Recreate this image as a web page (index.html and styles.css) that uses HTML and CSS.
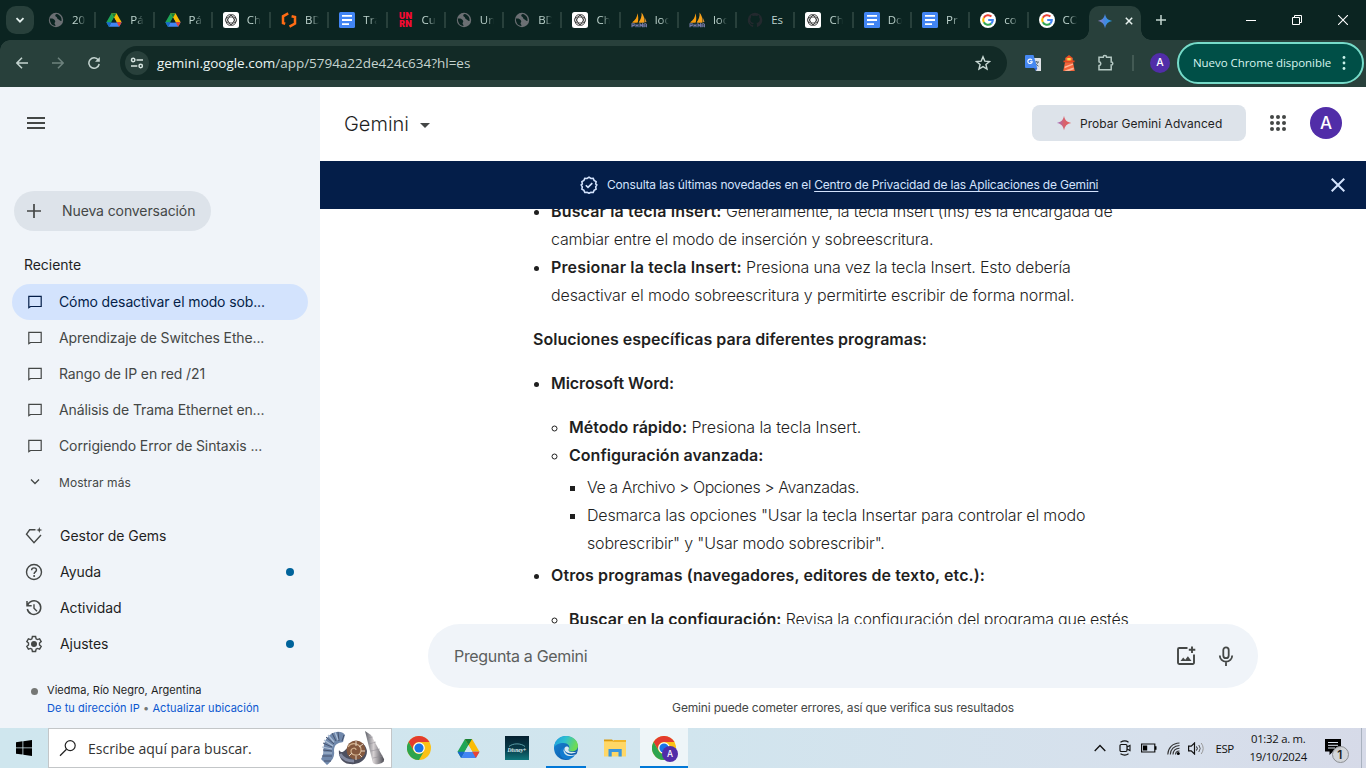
FILE: index.html
```html
<!DOCTYPE html>
<html lang="es">
<head>
<meta charset="utf-8">
<title>Gemini</title>
<link rel="stylesheet" href="styles.css">
</head>
<body>
<svg class="defs" width="0" height="0" aria-hidden="true">
  <defs>
    <linearGradient id="gblue" x1="0" y1="0" x2="1" y2="0"><stop offset="0" stop-color="#9c7fc9"/><stop offset=".45" stop-color="#4a86e0"/><stop offset="1" stop-color="#1fa0e8"/></linearGradient>
    <linearGradient id="gred" x1="0" y1="0" x2="1" y2="0"><stop offset="0" stop-color="#9b6fc4"/><stop offset=".5" stop-color="#d9626c"/><stop offset="1" stop-color="#e0605c"/></linearGradient>
    <linearGradient id="edgeA" x1="0" y1="0" x2="1" y2=".3"><stop offset="0" stop-color="#1b9de2"/><stop offset=".5" stop-color="#2fc0cf"/><stop offset="1" stop-color="#6edb55"/></linearGradient>
    <linearGradient id="edgeB" x1="0" y1="0" x2="1" y2="1"><stop offset="0" stop-color="#1689d8"/><stop offset="1" stop-color="#0c4f9e"/></linearGradient>
    <linearGradient id="dis" x1="0" y1="0" x2="0" y2="1"><stop offset="0" stop-color="#04202f"/><stop offset=".55" stop-color="#083c4a"/><stop offset="1" stop-color="#10777c"/></linearGradient>
    <linearGradient id="shell" x1="0" y1="0" x2="1" y2="0"><stop offset="0" stop-color="#5d6068"/><stop offset=".45" stop-color="#d5d0d2"/><stop offset="1" stop-color="#4c4c54"/></linearGradient>
    <symbol id="globe" viewBox="0 0 16 16"><circle cx="8" cy="8" r="7.2" fill="#6b6f73"/><path d="M1.800 6.600c2.400-.5 4 .2 5 1.600 1 1.300.2 2-.3 3 .3 1 1 1.500 1 2.800-3.500-.2-5.600-2.700-5.700-7.400zM8.600 1.900C6.800 2.400 6.900 4 8.200 4.700c1.600.8.4 2 2 2.500 1.400.4 1.400 1.800 3.300 1.700.5-3.400-1.300-6.300-4.900-7z" fill="#0b2421"/></symbol>
    <symbol id="drive" viewBox="0 0 24 22"><path d="M8.300 1h7.400L8 14.300 4.300 21 .5 14.500z" fill="#1ea556"/><path d="M8.300 1h7.400l7.800 13.500h-7.500z" fill="#fbbc04"/><path d="M4.300 21l3.800-6.500h15.400L19.700 21z" fill="#4285f4"/><path d="M.5 14.500h7.600L4.300 21z" fill="#1967d2"/><path d="M16 14.500h7.500L19.700 21z" fill="#ea4335"/><path d="M8.300 1h7.400L12 7.500z" fill="#188038"/><path d="M12 7.700l4 6.900H8z" fill="var(--hole,#0b2421)"/></symbol>
    <symbol id="gpt" viewBox="0 0 16 16"><rect width="16" height="16" rx="2.500" fill="#fff"/><g fill="none" stroke="#222" stroke-width=".75"><rect x="2.300" y="5" width="11.400" height="6" rx="3"/><rect x="2.300" y="5" width="11.400" height="6" rx="3" transform="rotate(60 8 8)"/><rect x="2.300" y="5" width="11.400" height="6" rx="3" transform="rotate(120 8 8)"/></g></symbol>
    <symbol id="doc" viewBox="0 0 16 16"><rect width="16" height="16" rx="1.500" fill="#4285f4"/><path d="M3 3.900h10M3 8h10M3 12.100h7" stroke="#fff" stroke-width="1.900"/></symbol>
    <symbol id="pma" viewBox="0 0 16 16"><path d="M6.300 1.300C6.300 5 4.500 8.300 1 10.500c2 .4 3.800.5 5.800 0C7.600 7 7.300 4 6.300 1.300z" fill="#f89c0e"/><path d="M10.600.6c.3 4-1 7.500-3 9.800 2 .5 4 .5 6 0C13.700 6 12.500 3 10.600.6z" fill="#f6a11b"/><path d="M13.500 5c1 2 1.500 3.500 2 5l-1.500.3z" fill="#c98b3d"/><path d="M1 15.300v-3.500h2.200v1.800H1.500M5 15.300v-3.500M5 13.500h2M7 15.300v-3.500M9 15.300v-3.500l1.300 2 1.300-2v3.500M13 15.300v-3l1.200-.7 1.200.7v3M13 14h2.400" fill="none" stroke="#777aa8" stroke-width="1.100"/></symbol>
    <symbol id="goog" viewBox="0 0 16 16"><circle cx="8" cy="8" r="8" fill="#fff"/><g fill="none" stroke-width="2.100"><path d="M11.400 4.600A4.800 4.800 0 0 0 3.800 5.700" stroke="#ea4335"/><path d="M3.800 5.700a4.800 4.800 0 0 0 0 4.600" stroke="#fbbc04"/><path d="M3.800 10.300a4.800 4.800 0 0 0 7.400 1.300" stroke="#34a853"/><path d="M11.200 11.600A4.700 4.700 0 0 0 12.800 8H8.200" stroke="#4285f4"/></g></symbol>
    <symbol id="spark" viewBox="0 0 16 16"><path d="M8 .8C8.700 5 11 7.300 15.200 8 11 8.700 8.700 11 8 15.200 7.300 11 5 8.700.8 8 5 7.300 7.300 5 8 .8z"/></symbol>
    <symbol id="chrome" viewBox="0 0 24 24"><circle cx="12" cy="12" r="12" fill="#fbc116"/><path d="M1.600 6A12 12 0 0 1 22.400 6H12a6 6 0 0 0-5.200 9z" fill="#e33b2e"/><path d="M1.600 6l5.200 9A6 6 0 0 0 17 15.200L12 24A12 12 0 0 1 1.600 6z" fill="#2da44e"/><circle cx="12" cy="12" r="5.800" fill="#fff"/><circle cx="12" cy="12" r="4.600" fill="#1a73e8"/></symbol>
    <symbol id="chat" viewBox="0 0 14 14"><path d="M.8 12.600V1.400h12.400v10.100H2.600z" fill="none" stroke="currentColor" stroke-width="1.200"/></symbol>
  </defs>
</svg>

<div class="screen">
  <div class="tabstrip">
    <div class="tabsearch"><svg width="10" height="10" viewBox="0 0 10 10"><path d="M1.500 3.200L5 6.700l3.500-3.500" fill="none" stroke="#e3f0ed" stroke-width="1.800"/></svg></div>
    <div class="tab"><svg><use href="#globe"/></svg><span>20</span></div>
    <div class="tab"><svg><use href="#drive"/></svg><span>Pá</span></div>
    <div class="tab"><svg><use href="#drive"/></svg><span>Pá</span></div>
    <div class="tab"><svg><use href="#gpt"/></svg><span>Ch</span></div>
    <div class="tab"><svg viewBox="0 0 16 16"><path d="M7.200 1.400L2 4.300v6.800l2.200.7M10.600 4.200L14 5v6.500L8.500 14.600" fill="none" stroke="#ff6c14" stroke-width="2.500"/></svg><span>BD</span></div>
    <div class="tab"><svg><use href="#doc"/></svg><span>Tra</span></div>
    <div class="tab"><div class="unrn">UN<br>RN</div><span>Cu</span></div>
    <div class="tab"><svg><use href="#globe"/></svg><span>Un</span></div>
    <div class="tab"><svg><use href="#globe"/></svg><span>BD</span></div>
    <div class="tab"><svg><use href="#gpt"/></svg><span>Ch</span></div>
    <div class="tab"><svg><use href="#pma"/></svg><span>loc</span></div>
    <div class="tab"><svg><use href="#pma"/></svg><span>loc</span></div>
    <div class="tab"><svg viewBox="0 0 16 16"><path d="M8 .8a7.300 7.300 0 0 0-2.300 14.200c.4 0 .5-.2.500-.4v-1.500c-2 .4-2.500-.9-2.500-.9-.4-.9-.9-1.200-.9-1.200-.6-.5.1-.4.100-.4.800 0 1.200.8 1.200.8.700 1.200 1.800.8 2.200.6.100-.5.300-.8.500-1-1.700-.2-3.400-.8-3.400-3.700 0-.8.300-1.500.8-2-.1-.200-.3-1 .1-2 0 0 .6-.2 2 .8a7 7 0 0 1 3.600 0c1.400-1 2-.8 2-.8.4 1 .2 1.800.1 2 .5.500.8 1.200.8 2 0 2.900-1.800 3.500-3.400 3.700.3.200.5.700.5 1.400v2.200c0 .2.100.5.500.4A7.300 7.300 0 0 0 8 .8z" fill="#23292e"/></svg><span class="wide">Es</span></div>
    <div class="tab"><svg><use href="#gpt"/></svg><span>Ch</span></div>
    <div class="tab"><svg><use href="#doc"/></svg><span>Do</span></div>
    <div class="tab"><svg><use href="#doc"/></svg><span>Pr</span></div>
    <div class="tab"><svg><use href="#goog"/></svg><span>co</span></div>
    <div class="tab nosep"><svg><use href="#goog"/></svg><span>CO</span></div>
    <div class="tab active"><svg fill="url(#gblue)"><use href="#spark"/></svg><svg class="x" viewBox="0 0 8 8"><path d="M.8.8l6.400 6.400M7.200.8L.8 7.200" stroke="#e8f2ef" stroke-width="1.500"/></svg></div>
    <svg class="plus" viewBox="0 0 10 10"><path d="M5 0v10M0 5h10" stroke="#c3d5d0" stroke-width="1.500"/></svg>
    <div class="winctl">
      <svg width="10" height="10" viewBox="0 0 10 10"><path d="M0 5.500h10" stroke="#fff"/></svg>
      <svg width="10" height="10" viewBox="0 0 10 10"><path d="M.5 2.500h7v7h-7zM2.500 2.500v-2h7v7h-2" fill="none" stroke="#fff"/></svg>
      <svg width="10" height="10" viewBox="0 0 10 10"><path d="M0 0l10 10M10 0L0 10" stroke="#fff" stroke-width="1.100"/></svg>
    </div>
  </div>

  <div class="toolbar">
    <div class="nav">
      <svg width="12" height="12" viewBox="0 0 12 12"><path d="M12 6H1.200M6 .8L.9 6 6 11.200" fill="none" stroke="#c3d3cf" stroke-width="1.500"/></svg>
      <svg width="12" height="12" viewBox="0 0 12 12"><path d="M0 6h10.800M6 .8L11.100 6 6 11.200" fill="none" stroke="#6d827d" stroke-width="1.500"/></svg>
      <svg width="12" height="12" viewBox="0 0 12 12"><path d="M10.300 3A5.200 5.200 0 1 0 11.200 7" fill="none" stroke="#c3d3cf" stroke-width="1.500"/><path d="M11.800 0v4.800H7z" fill="#c3d3cf"/></svg>
    </div>
    <div class="omni">
      <div class="site"><svg width="14" height="14" viewBox="0 0 14 14"><g fill="none" stroke="#d7e5e1" stroke-width="1.500"><circle cx="3.200" cy="4" r="1.700"/><path d="M6.500 4H13M1 10h6.300"/><circle cx="10.700" cy="10" r="1.700"/></g></svg></div>
      <span class="url"><b>gemini.google.com</b>/app/5794a22de424c634?hl=es</span>
      <svg class="star" width="16" height="16" viewBox="0 0 16 16"><path d="M8 1.800l1.800 4.300 4.700.4-3.600 3 1.100 4.600-4-2.500-4 2.500 1.100-4.600-3.600-3 4.700-.4z" fill="none" stroke="#c8d8d4" stroke-width="1.400"/></svg>
    </div>
    <div class="exts">
      <svg width="16" height="16" viewBox="0 0 16 16"><path d="M6 3h9a1 1 0 0 1 1 1v12h-5z" fill="#dfe2e6"/><path d="M9 7h5M11.500 6v1M13 7c-.5 2-2 3.500-4 4.300M10 8c.8 1.500 2 2.500 3.500 3.200" stroke="#5b6b75" fill="none"/><path d="M1 0h7.500l3.800 13H1a1 1 0 0 1-1-1V1a1 1 0 0 1 1-1z" fill="#4688f1"/><path d="M7 5.300a2.200 2.200 0 1 0 .2 1.500H5" fill="none" stroke="#fff" stroke-width="1.100"/><path d="M9 13h3.300L11 16z" fill="#3367d6"/></svg>
      <svg width="16" height="16" viewBox="0 0 16 16"><path d="M8 0l3.800 3H4.200z" fill="#ee4d22"/><path d="M4.300 3h7.400v3H4.300z" fill="#f46b35"/><path d="M6.300 3h3.400v3H6.300z" fill="#ffd84d"/><path d="M2.500 5.500h11v1.800h-11z" fill="#e8451e"/><path d="M4 7.300h8L13.800 16H2.200z" fill="#f4643a"/><path d="M3.800 11.500l8-3 .3 1.200-8.500 3.600zM3 15.800l9.500-3.200.4 1.600L8 16z" fill="#ffb598"/></svg>
      <svg width="18" height="18" viewBox="0 0 18 18"><path d="M2 3.300h4.200a1.700 1.700 0 0 1 3.400 0h4.600v4.600a1.600 1.600 0 0 1 0 3.200v4.600H2v-4.100c2.400-.4 2.400-3.400 0-3.800z" fill="none" stroke="#b5c9c4" stroke-width="1.500"/></svg>
      <i class="bar"></i>
      <div class="ava small">A</div>
    </div>
    <div class="update"><span>Nuevo Chrome disponible</span><svg width="4" height="16" viewBox="0 0 4 16"><g fill="#c9f2ea"><circle cx="2" cy="2.500" r="1.400"/><circle cx="2" cy="8" r="1.400"/><circle cx="2" cy="13.500" r="1.400"/></g></svg></div>
  </div>

  <div class="page">
    <aside class="side">
      <div class="burger"><svg width="18" height="12" viewBox="0 0 18 12"><path d="M0 1h18M0 6h18M0 11h18" stroke="#444746" stroke-width="2"/></svg></div>
      <div class="newchat"><svg width="14" height="14" viewBox="0 0 14 14"><path d="M7 0v14M0 7h14" stroke="#444746" stroke-width="1.700"/></svg><span>Nueva conversación</span></div>
      <div class="recent">Reciente</div>
      <div class="row sel"><svg><use href="#chat"/></svg><span>Cómo desactivar el modo sob...</span></div>
      <div class="row"><svg><use href="#chat"/></svg><span>Aprendizaje de Switches Ethe...</span></div>
      <div class="row"><svg><use href="#chat"/></svg><span>Rango de IP en red /21</span></div>
      <div class="row"><svg><use href="#chat"/></svg><span>Análisis de Trama Ethernet en...</span></div>
      <div class="row"><svg><use href="#chat"/></svg><span>Corrigiendo Error de Sintaxis ...</span></div>
      <div class="row more"><svg viewBox="1 1 14 14"><path d="M4 5.500l4 4 4-4" fill="none" stroke="#444746" stroke-width="1.300"/></svg><span>Mostrar más</span></div>
      <div class="links">
        <div class="link"><svg viewBox="0 0 18 18"><path d="M10.500 2.800H4.700L1.500 7.200 9 15.700l7-7.700" fill="none" stroke="#444746" stroke-width="1.400"/><path d="M14.300 0l.8 2.200 2.300.8-2.300.8-.8 2.300-.8-2.300-2.300-.8 2.300-.8z" fill="#444746"/></svg><span>Gestor de Gems</span></div>
        <div class="link"><svg viewBox="0 0 18 18"><circle cx="9" cy="9" r="7.500" fill="none" stroke="#444746" stroke-width="1.400"/><path d="M6.600 7.200c0-3 4.900-3 4.900-.2 0 1.800-2.400 2-2.400 3.900" fill="none" stroke="#444746" stroke-width="1.400"/><circle cx="9.100" cy="13" r="1" fill="#444746"/></svg><span>Ayuda</span><i class="dot"></i></div>
        <div class="link"><svg viewBox="0 0 18 18"><path d="M2.600 6.200A6.800 6.800 0 1 1 2.300 10M2 2v4.700h4.700" fill="none" stroke="#444746" stroke-width="1.500"/><path d="M9 5.200v4.100l3 3" fill="none" stroke="#444746" stroke-width="1.400"/></svg><span>Actividad</span></div>
        <div class="link"><svg viewBox="0 0 18 18"><path d="M7.400 1.500h3.200l.5 2.300 1.300.8 2.200-.8 1.600 2.800-1.700 1.500v1.800l1.700 1.500-1.600 2.800-2.200-.8-1.300.8-.5 2.300H7.400l-.5-2.300-1.300-.8-2.200.8-1.600-2.800 1.700-1.500V8.100L1.800 6.600l1.600-2.800 2.200.8 1.300-.8z" fill="none" stroke="#444746" stroke-width="1.400"/><circle cx="9" cy="9" r="3" fill="#444746"/></svg><span>Ajustes</span><i class="dot"></i></div>
      </div>
      <div class="loc"><i></i><div><div class="place">Viedma, Río Negro, Argentina</div><div class="ip">De tu dirección IP <em>•</em> Actualizar ubicación</div></div></div>
    </aside>

    <main class="main">
      <header class="head">
        <div class="brand">Gemini</div>
        <svg class="caret" width="10" height="5" viewBox="0 0 10 5"><path d="M0 0h10L5 5z" fill="#444746"/></svg>
        <div class="adv"><svg width="16" height="16" fill="url(#gred)"><use href="#spark"/></svg><span>Probar Gemini Advanced</span></div>
        <svg class="apps" width="16" height="16" viewBox="0 0 16 16"><g fill="#444746"><circle cx="2" cy="2" r="2"/><circle cx="8" cy="2" r="2"/><circle cx="14" cy="2" r="2"/><circle cx="2" cy="8" r="2"/><circle cx="8" cy="8" r="2"/><circle cx="14" cy="8" r="2"/><circle cx="2" cy="14" r="2"/><circle cx="8" cy="14" r="2"/><circle cx="14" cy="14" r="2"/></g></svg>
        <div class="ava">A</div>
      </header>
      <div class="banner">
        <svg width="18" height="18" viewBox="0 0 18 18"><path d="M9 1.200l1.900 1.300 2.300-.2.900 2.100 2 1.200-.4 2.300L16.800 9l-1.100 1.900.4 2.300-2 1.200-.9 2.100-2.300-.2L9 17.300l-1.900-1-2.300.2-.9-2.100-2-1.200.4-2.300L1.200 9l1.100-1.100-.4-2.300 2-1.200.9-2.100 2.300.2z" fill="none" stroke="#d3e3fd" stroke-width="1.600"/><path d="M5.800 9.200L8 11.400l4.300-4.300" fill="none" stroke="#d3e3fd" stroke-width="1.600"/></svg>
        <span>Consulta las últimas novedades en el <u>Centro de Privacidad de las Aplicaciones de Gemini</u></span>
        <svg class="bx" width="14" height="14" viewBox="0 0 14 14"><path d="M.7.700l12.600 12.600M13.300.7L.7 13.300" stroke="#d3e3fd" stroke-width="2"/></svg>
      </div>
      <div class="chat">
        <div class="msg">
          <ul>
            <li><strong class="w17">Buscar la tecla Insert:</strong> Generalmente, la tecla Insert (Ins) es la encargada de<br><span class="w19">cambiar entre el modo de inserción y sobreescritura.</span></li>
            <li><strong class="w17">Presionar la tecla Insert:</strong> Presiona una vez la tecla Insert. Esto debería<br><span class="l14">desactivar el modo sobreescritura y permitirte escribir de forma normal.</span></li>
          </ul>
          <p><strong>Soluciones específicas para diferentes programas:</strong></p>
          <ul>
            <li><strong class="l8">Microsoft Word:</strong>
              <ul class="sub">
                <li><strong>Método rápido:</strong> <span class="l10">Presiona la tecla Insert.</span></li>
                <li><strong>Configuración avanzada:</strong>
                  <ul class="deep">
                    <li><span class="l46">Ve a Archivo &gt; Opciones &gt; Avanzadas.</span></li>
                    <li>Desmarca las opciones "Usar la tecla Insertar para controlar el modo<br>sobrescribir" y "Usar modo sobrescribir".</li>
                  </ul>
                </li>
              </ul>
            </li>
            <li class="next"><strong class="w9">Otros programas (navegadores, editores de texto, etc.):</strong>
              <ul class="sub">
                <li><strong>Buscar en la configuración:</strong> <span class="l20">Revisa la configuración del programa que estés</span></li>
              </ul>
            </li>
          </ul>
        </div>
      </div>
      <div class="prompt">
        <span>Pregunta a Gemini</span>
        <svg width="20" height="20" viewBox="0 0 20 20"><path d="M11.500 2H3.200A1.200 1.200 0 0 0 2 3.200v13.600A1.200 1.200 0 0 0 3.200 18h13.600a1.200 1.200 0 0 0 1.200-1.200V8.500" fill="none" stroke="#444746" stroke-width="1.900"/><path d="M16 .5v6.500M12.800 3.700h6.500" stroke="#444746" stroke-width="1.900"/><path d="M4.500 15l2.700-3.600 2 2.400 2.700-3.600 3.600 4.800z" fill="#444746"/></svg>
        <svg width="16" height="20" viewBox="0 0 16 20"><rect x="5.300" y="1.300" width="5.400" height="10.800" rx="2.700" fill="none" stroke="#444746" stroke-width="1.800"/><path d="M1.800 9.500a6.200 6.200 0 0 0 12.400 0M8 15.500V20" fill="none" stroke="#444746" stroke-width="1.800"/></svg>
      </div>
      <div class="note">Gemini puede cometer errores, así que verifica sus resultados</div>
    </main>
  </div>

  <div class="taskbar">
    <div class="start"><svg width="16" height="16" viewBox="0 0 16 16"><path d="M0 2.200L6.500 1.300v6.200H0zM7.300 1.200L16 0v7.500H7.300zM0 8.300h6.500v6.300L0 13.700zM7.300 8.300H16V16l-8.700-1.200z"/></svg></div>
    <div class="search">
      <svg width="18" height="18" viewBox="0 0 18 18"><circle cx="11.200" cy="6.600" r="5" fill="none" stroke="#222" stroke-width="1.200"/><path d="M7.500 10.200L1 16.700" stroke="#222" stroke-width="1.300"/></svg>
      <span>Escribe aquí para buscar.</span>
      <svg class="shells" width="66" height="36" viewBox="0 0 66 36">
        <path d="M25 5C21-1 8 1 4 14c-1 7 0 11-3 15l6 6c5-4 8-8 7-14 0-7 4-8 9-9z" fill="#7088ab"/><path d="M3 13l9 4M6 7l8 7M12 3l4 8M18 2l1 9M3 20l9 1M2 26l10 0M4 31l7 0M24 5l-2 6" stroke="#46536e" stroke-width="1"/><path d="M4 10l9 6M8 5l6 7M15 2l3 8M2 17l10 2M3 23l9 0" stroke="#aebfd6" stroke-width="1.200"/>
        <path d="M19 20c3 5 6 0 10-4 7-7 17-4 18 5 0 9-8 14-17 13-8 0-12-8-11-14z" fill="#4d5060"/><path d="M20 24c3 5 8 7 14 7" stroke="#8289a0" stroke-width="3" fill="none"/><circle cx="36" cy="20" r="9.500" fill="#84583e"/><path d="M36 20c0-3-5-2-5 1 0 5 9 6 10 0 1-7-9-10-13-4" fill="none" stroke="#d2b08c" stroke-width="1.200"/><path d="M36 11v5M43 14l-4 3M45 21h-4M42 27l-3-3M29 26l3-3M36 30v-4" stroke="#e3d3c2" stroke-width="1"/>
        <path d="M45 1l6 4 13 24c1 4-7 7-11 4z" fill="url(#shell)"/><path d="M47 8l6-1M49 14l7-2M51 21l9-2M53 28l10-2" stroke="#8d8890" stroke-width=".5"/>
      </svg>
    </div>
    <div class="app"><svg width="24" height="24"><use href="#chrome"/></svg></div>
    <div class="app"><svg width="23" height="21"><use href="#drive"/></svg></div>
    <div class="app"><svg width="24" height="24" viewBox="0 0 24 24"><rect width="24" height="24" fill="url(#dis)"/><path d="M4 10.500c4-3.500 12-3.500 16 0" fill="none" stroke="#6eb6bf" stroke-width=".8"/><text x="2.500" y="15.500" class="dis">Disney+</text></svg></div>
    <div class="app run"><svg width="24" height="24" viewBox="0 0 24 24"><circle cx="12" cy="12" r="12" fill="url(#edgeB)"/><path d="M0 11.500C.5 4.800 5.500 0 12 0c7 0 12 5 12 9.800 0 3.500-2.500 5.700-5.700 5.700-2.800 0-4.300-1-3.500-2.200C16.600 10.500 14 7 9.500 7 5 7 1 9 0 11.500z" fill="url(#edgeA)"/><path d="M10.200 12c-.5 5 4.500 8.300 11.500 6.600l1 .1-2.500 4.800H16C10 22 6.500 16.500 10.200 12z" fill="#d4e7ee"/><path d="M9.500 14c0 5.500 6 7.500 11.500 5-4 6.500-13.500 5.500-15-1C5.500 14 8 12 10.700 11.600z" fill="#127bd0"/><path d="M10.800 11.500c-.8 1.500 0 4.500 3.500 5.500 3 .8 6 .4 8.400-1.200-1.300.2-7.700 1-8.200-1.500-.1-.8.800-1.500.3-2.800-.6-1.500-3.200-1.500-4 0z" fill="#dcebf1"/></svg></div>
    <div class="app"><svg width="22" height="20" viewBox="0 0 22 20"><path d="M0 1.500h8l2 2H0z" fill="#d99b11"/><path d="M0 3h22v15.500H0z" fill="#ffd766"/><path d="M0 3.500h8.500l1.500-1.500h12V4H0z" fill="#f0b429"/><path d="M4.500 18.500V11h13.200v7.500h-3.200V14H7.700v4.500z" fill="#3a96dd"/></svg></div>
    <div class="app run cur"><svg width="26" height="26" viewBox="0 0 26 26"><use href="#chrome" width="24" height="24"/><circle cx="18" cy="18" r="8" fill="#512da8"/><text x="15" y="21.300" class="bdg">A</text></svg></div>
    <div class="tray">
      <svg width="12" height="8" viewBox="0 0 12 8"><path d="M.7 7L6 1.500 11.300 7" fill="none" stroke="#111" stroke-width="1.300"/></svg>
      <svg width="12" height="16" viewBox="0 0 12 16"><rect x="1" y="4.500" width="7" height="7" rx="1.200" fill="none" stroke="#111" stroke-width="1.200"/><path d="M8 7l3-1.500v5L8 9M1.500 2.200Q6-.4 9.500 2.200M1.500 13.800Q6 16.400 9.500 13.800" fill="none" stroke="#111" stroke-width="1.100"/></svg>
      <svg width="16" height="10" viewBox="0 0 16 10"><path d="M.6 1h13.200v8H.6z" fill="none" stroke="#111" stroke-width="1.200"/><path d="M2 2.500h4.200v5H2zM13.800 3.300h1.700v3.400h-1.700z"/></svg>
      <svg width="13" height="13" viewBox="0 0 13 13"><g fill="none" stroke="#333" stroke-width="1.100"><path d="M.8 12.500C1 6 5.500 1.200 12.500 1M3.300 12.500c.2-5 3.700-8.800 9.200-9M6 12.500c.2-3.500 2.700-6 6.500-6.200M8.500 12.500c.1-1.900 1.700-3.400 4-3.500"/></g><circle cx="11.300" cy="11.500" r="1.500"/></svg>
      <svg width="17" height="13" viewBox="0 0 17 13"><path d="M.6 4.200h2.600L6.500 1v11L3.200 8.800H.6z" fill="none" stroke="#111" stroke-width="1.200"/><path d="M8.500 4.500q1.600 2 0 4" stroke="#111" fill="none"/><path d="M10.800 3q2.800 3.500 0 7" stroke="#555" fill="none"/><path d="M13.200 1q4 5.500 0 11" stroke="#999" fill="none"/></svg>
      <span class="lang">ESP</span>
      <div class="clock"><span>01:32 a. m.</span><span>19/10/2024</span></div>
      <svg class="act" width="24" height="24" viewBox="0 0 24 24"><path d="M0 0h16v12.500H8L4.500 16v-3.500H0z"/><path d="M3 3.500h10M3 6.300h10M3 9h7" stroke="#dbe3ee" stroke-width="1"/><circle cx="15.500" cy="15.500" r="8" fill="#d3d5d8" fill-opacity=".93" stroke="#8c8f93" stroke-width="1"/><text x="12.300" y="19.800" class="num">1</text></svg>
      <i class="peek"></i>
    </div>
  </div>
</div>
</body>
</html>
```
FILE: styles.css
```css
*{box-sizing:border-box}
body{margin:0;font-family:Inter,"Open Sans",sans-serif;background:#fff;overflow:hidden}
svg{flex:none;display:block}
.defs{position:absolute}
.screen{width:1366px;height:768px;display:flex;flex-direction:column;overflow:hidden}

/* browser chrome */
.tabstrip{height:40px;flex:none;background:#0b2421;display:flex;align-items:center;font-family:"Open Sans","Noto Sans",sans-serif}
.tabsearch{width:28px;height:28px;margin:0 4px 0 6px;border-radius:10px;background:#28403b;display:flex;align-items:center;justify-content:center;flex:none}
.tab{width:58.28px;height:16px;flex:none;display:flex;align-items:center;padding-left:10px;gap:8px;border-right:2px solid #28403b}
.tab svg{width:16px;height:16px}
.tab span{width:16px;white-space:nowrap;font-size:11.500px;line-height:16px;color:#bdd3cd;-webkit-mask-image:linear-gradient(90deg,#000 6px,transparent 14px);mask-image:linear-gradient(90deg,#000 6px,transparent 14px)}
.tab span.wide{-webkit-mask-image:none;mask-image:none}
.tab.nosep{border-color:transparent}
.unrn{width:16px;flex:none;font:900 8.500px/8px Inter,sans-serif;color:#f50a32;text-align:center;letter-spacing:.2px}
.tab.active{position:relative;width:52px;height:34px;margin:6px 0 0 2px;padding:0 0 5px 8px;gap:12px;background:#28403b;border:0;border-radius:10px 10px 0 0}
.active::before,.active::after{content:"";position:absolute;bottom:0;width:10px;height:10px}
.active::before{left:-10px;background:radial-gradient(circle at 0 0,transparent 9.500px,#28403b 10px)}
.active::after{right:-10px;background:radial-gradient(circle at 100% 0,transparent 9.500px,#28403b 10px)}
.active svg.x{width:8px;height:8px}
.plus{width:10px;height:10px;margin-left:15px}
.winctl{margin-left:auto;display:flex;gap:36px;padding-right:18px}
.toolbar{height:47px;flex:none;display:flex;align-items:center;padding-bottom:1px;background:radial-gradient(circle at 10px 10px,transparent 9.500px,#0b2421 10px) 0 0/10px 10px no-repeat,#28403b;font-family:"Open Sans","Noto Sans",sans-serif}
.nav{display:flex;gap:24px;padding:0 20px 0 16px;width:120px}
.omni{width:887px;height:34px;border-radius:17px;background:#122a26;display:flex;align-items:center;padding:0 16px 0 5px}
.site{width:24px;height:24px;border-radius:12px;background:#28403b;display:flex;align-items:center;justify-content:center}
.url{margin-left:8px;font-size:13.500px;color:#c5d3cf;white-space:nowrap;letter-spacing:-.02px}
.url b{font-weight:400;color:#eaf5f2}
.star{margin-left:auto}
.exts{display:flex;align-items:center;padding-left:18px;gap:20px;width:170px}
.bar{width:2px;height:16px;background:#435a54;margin-left:-3px}
.ava{width:32px;height:32px;border-radius:50%;background:#512da8;color:#fff;font:500 17px/33px Inter,sans-serif;text-align:center;flex:none}
.ava.small{width:20px;height:20px;font-size:10.500px;line-height:20px;margin-left:-4px}
.update{width:187px;height:42px;border:2px solid #76dbc9;border-radius:21px;background:#004f47;display:flex;align-items:center;padding:0 16px 0 14px;justify-content:space-between;color:#d7f5ef;font-size:11.500px;white-space:nowrap;letter-spacing:-.06px}
.update span{padding-bottom:1px}

.page{flex:1;min-height:0;display:flex}

/* sidebar */
.side{width:320px;background:#f0f4f9;color:#1f1f1f;font-size:14px;white-space:nowrap}
.burger{height:104px;padding:30px 0 0 27px}
.newchat{width:197px;height:40px;margin-left:14px;border-radius:20px;background:#dde3ea;color:#444746;display:flex;align-items:center;padding-left:13px;gap:21px;letter-spacing:-.1px}
.newchat span{padding-bottom:1px}
.recent{height:53px;padding:25px 0 0 24px;line-height:18px;letter-spacing:-.05px}
.row{width:296px;height:36px;margin-left:12px;border-radius:18px;display:flex;align-items:center;padding-left:16px;gap:17px;color:#444746;letter-spacing:-.12px}
.row svg{width:14px;height:14px}
.row span{padding-bottom:1px}
.sel{background:#d3e3fd;color:#041e49}
.more{font-size:12px;letter-spacing:.08px}
.more span{padding:1px 0 0}
.links{padding-top:18px}
.link{height:36px;display:flex;align-items:center;padding:0 26px 0 25px;gap:17px;letter-spacing:-.04px}
.link svg{width:18px;height:18px}
.link span{padding-bottom:1px}
.dot{width:8px;height:8px;border-radius:4px;background:#00639b;margin-left:auto}
.loc{display:flex;gap:9px;padding:19px 0 0 31px;font-size:11px;line-height:18px;letter-spacing:.04px}
.loc>i{width:7px;height:7px;border-radius:4px;background:#757775;margin-top:7px}
.ip{color:#0b57d0;letter-spacing:.06px}
.ip em{font-style:normal;color:#757775}

/* conversation */
.main{flex:1;min-width:0;display:flex;flex-direction:column;background:#fff}
.head{height:74px;flex:none;display:flex;align-items:center;padding:0 24px 2px;white-space:nowrap}
.brand{font-size:20px;font-weight:300;color:#1f1f1f;padding-top:2px}
.caret{margin:5px 0 0 11px}
.adv{margin-left:auto;width:214px;height:36px;border-radius:8px;background:#dde3ea;display:flex;align-items:center;padding-left:24px;gap:8px;font-size:12px;color:#1f1f1f;letter-spacing:.04px}
.apps{margin:0 24px}
.banner{height:48px;flex:none;background:#041e49;color:#d3e3fd;display:flex;align-items:center;padding-left:260px;gap:9px;font-size:12px;letter-spacing:-.17px;white-space:nowrap}
.banner span{padding-bottom:1px}
.banner u{text-underline-offset:2px}
.bx{margin-left:auto;margin-right:21px}
.chat{height:415px;flex:none;overflow:hidden;padding-left:213px}
.msg{margin-top:-12px;font-size:16px;line-height:28px;font-weight:300;color:#1f1f1f;letter-spacing:-.17px;white-space:nowrap}
.msg ul{margin:0;padding:0 0 0 18px;list-style:disc}
.msg p{margin:16px 0}
.msg strong{font-weight:600;letter-spacing:.03px}
.msg strong.w17{letter-spacing:.15px}
.msg strong.w9{letter-spacing:.1px}
.msg strong.l8{letter-spacing:-.08px}
.msg .w19{letter-spacing:-.19px}
.msg .l14{letter-spacing:-.13px}
.msg .l10{letter-spacing:-.1px}
.msg .l20{letter-spacing:-.21px}
.msg .l46{letter-spacing:-.46px}
.msg ul.sub{margin-top:16px;list-style:circle}
.msg ul.deep{margin-top:4px;list-style:square}
.msg .next{margin-top:4px}
.prompt{width:830px;height:64px;margin-left:108px;border-radius:32px;background:#f0f4f9;display:flex;align-items:center;padding:0 24px 0 26px;flex:none;font-size:16px;color:#5c5f5e;letter-spacing:-.33px}
.prompt span{margin-right:auto;padding-bottom:1px}
.prompt svg+svg{margin-left:22px}
.note{text-align:center;font-size:12px;line-height:40px;color:#444746;letter-spacing:-.17px}

/* taskbar */
.taskbar{--hole:#d0e6ee;height:40px;flex:none;display:flex;align-items:center;background:linear-gradient(90deg,#cfe6ee,#d1e5ee 50%,#d7e0ec 85%,#d6dae8);font-family:"Open Sans","Noto Sans",sans-serif;white-space:nowrap}
.start{width:48px;padding-left:16px}
.search{width:344px;height:40px;background:#fff;border:1px solid #c3c6c8;display:flex;align-items:center;padding-left:10px;font-size:14px;color:#333}
.search span{margin-left:11px}
.shells{margin-left:auto;margin-right:5px}
.app{width:48px;height:40px;margin-right:1px;display:flex;align-items:center;justify-content:center;position:relative}
.search+.app{margin-left:3px}
.run::after{content:"";position:absolute;left:4px;right:4px;bottom:0;height:2px;background:#0078d7}
.cur{background:#eef5f8}
.cur::after{left:0;right:0}
.cur svg{margin:2px 0 0 2px}
.dis{font:italic 700 5.500px "Liberation Serif",serif;fill:#e4f7f7}
.bdg{font:500 8.500px Inter,sans-serif;fill:#fff}
.num{font:600 12px Inter,sans-serif;fill:#222}
.tray{margin-left:auto;display:flex;align-items:center}
.tray svg{margin-right:10px}
.tray svg:first-child{margin-right:13px}
.tray svg:nth-child(4){margin-right:8px}
.lang{font-size:11.500px;letter-spacing:-.5px;color:#111;margin-left:1px;width:19px}
.clock{display:flex;flex-direction:column;align-items:center;font-size:11.300px;line-height:18px;letter-spacing:-.25px;color:#111;margin:0 18px 0 15px}
.tray svg.act{margin:5px 12px 0 0}
.peek{width:1px;height:40px;background:#a9b2bf;margin-right:4px}
```
